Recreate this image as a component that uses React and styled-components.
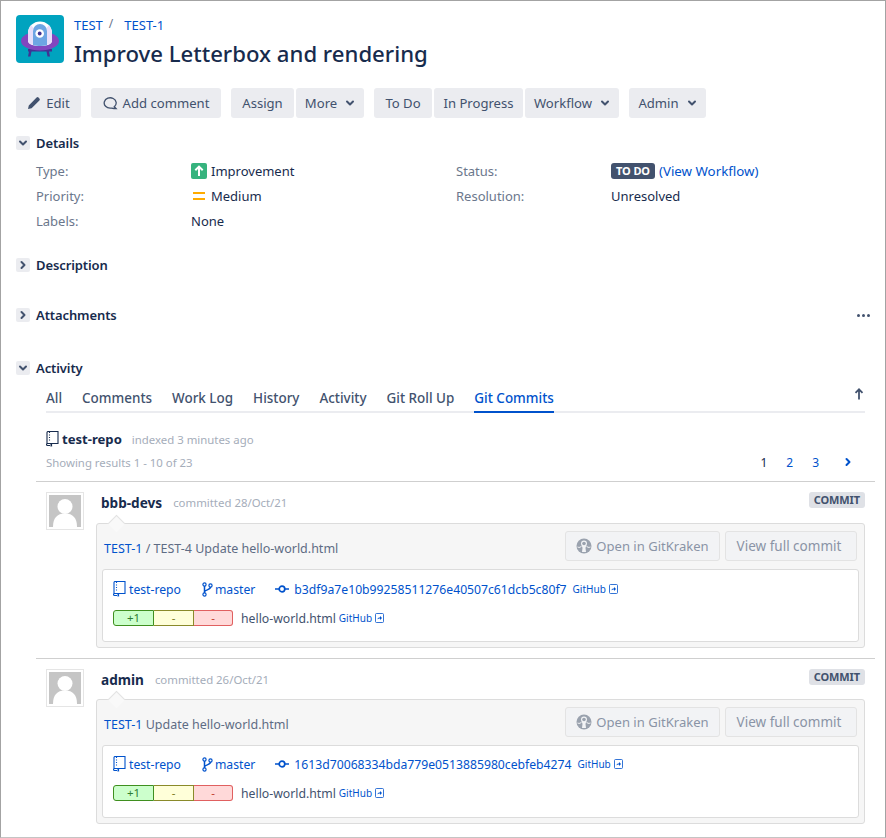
import React from "react";
import styled, { createGlobalStyle } from "styled-components";

const Global = createGlobalStyle`
  html, body { margin: 0; padding: 0; background: #fff; }
  body { font-family: "Noto Sans", "Open Sans", sans-serif; font-size: 13px; color: #172b4d; }
  * { box-sizing: border-box; }
`;

const Page = styled.div`
  width: 886px; height: 838px; overflow: hidden;
  border: 1px solid #a3a3a3; border-bottom-color: #c4c4c4;
  padding: 14px 20px 0 15px;
`;
const Header = styled.header`display: flex; gap: 10px; height: 59px;`;
const HeadText = styled.div`display: flex; flex-direction: column;`;
const Crumbs = styled.div`display: flex; height: 20px; align-items: center; font-size: 13px;`;
const Link = styled.a`color: #0052cc; text-decoration: none;`;
const Slash = styled.span`color: #6b778c; margin: -4px 11px 0 6px; font-size: 12px;`;
const Title = styled.h1`margin: 1px 0 0; font-size: 22.15px; font-weight: 500; line-height: 34px; height: 34px;`;

const Toolbar = styled.div`display: flex; margin-top: 14px; height: 30px;`;
const Group = styled.div`display: flex; gap: 2px; margin-right: 10px;`;
const Btn = styled.button`
  height: 30px; width: ${p => p.$w}px; border: 0; padding: 0; background: #ebecf0; color: #42526e;
  border-radius: 3px; font: inherit; font-size: 13.1px;
  display: flex; align-items: center; justify-content: center; gap: ${p => p.$g ?? 5}px;
`;

const SectionHead = styled.div`
  display: flex; align-items: center; height: 20px; gap: 6px;
  margin-top: ${p => p.$mt}px; font-weight: 600; font-size: 13px; color: #172b4d; letter-spacing: -0.1px;
`;
const Toggle = styled.span`
  width: 14px; height: 14px; border-radius: 2px; background: #ebecf0; display: flex; align-items: center; justify-content: center;
`;
const Spacer = styled.div`flex: 1;`;
const Dots = styled.span`display: flex; gap: 2px; margin-right: -5px;`;
const Dot = styled.i`width: 3px; height: 3px; border-radius: 50%; background: #42526e; display: block;`;

const Details = styled.div`display: grid; grid-template-columns: 155px 265px 155px 1fr; grid-auto-rows: 25px; margin: 5px 0 0 20px; align-items: center;`;
const Label = styled.div`color: #6b778c;`;
const Value = styled.div`display: flex; align-items: center; gap: 4px; color: #172b4d;`;
const Lozenge = styled.span`
  background: #42526e; color: #fff; font-size: 11px; font-weight: 700; border-radius: 3px; padding: 0 5px; height: 16px; line-height: 16px; letter-spacing: -0.1px;
`;
const WideLink = styled(Link)`font-size: 13.3px;`;

const Activity = styled.div`margin-left: 30px;`;
const TabsRow = styled.div`display: flex; gap: 20px; height: 26px; border-bottom: 2px solid #ebecf0; margin-top: 9px; position: relative; width: 819px;`;
const Tab = styled.a`
  color: ${p => p.$active ? "#0052cc" : "#42526e"}; font-weight: 500; font-size: 13.45px; height: 26px; line-height: 23px;
  border-bottom: 2px solid ${p => p.$active ? "#0052cc" : "transparent"};
`;
const Top = styled.span`position: absolute; right: 0; top: 0;`;
const RepoRow = styled.div`display: flex; align-items: center; height: 20px; margin-top: 16px; gap: 3px;`;
const RepoName = styled.b`font-weight: 700; font-size: 13.1px; color: #172b4d; margin-right: 7px;`;
const Muted = styled.span`color: #a5adba; font-size: 11.4px;`;
const ResultRow = styled.div`display: flex; justify-content: space-between; align-items: center; height: 20px; margin-top: 3px; width: 819px;`;
const Pager = styled.div`display: flex; align-items: center; gap: 19px; font-size: 12px; padding-right: 12px;`;
const PageNo = styled.span`color: ${p => p.$active ? "#172b4d" : "#0052cc"};`;
const PagerNext = styled.span`display: flex; margin-left: 5px;`;
const PagerGap = styled.div`height: 9px;`;

const Commit = styled.section`
  margin-left: -10px; width: 839px; border-top: 1px solid #cfcfcf;
  height: 177px; padding: 10px 10px 0 10px; display: grid; grid-template-columns: 50px 1fr; position: relative;
`;
const Avatar = styled.div`width: 38px; height: 38px; border: 1px solid #e5e5e5; padding: 2px; background: #fff;`;
const AvatarImg = styled.div`width: 32px; height: 32px; background: #c5c5c5; overflow: hidden;`;
const CommitBody = styled.div``;
const Meta = styled.div`display: flex; align-items: center; height: 20px; gap: 11px; padding-left: 5px; position: relative;`;
const Author = styled.b`font-weight: 700; font-size: 13.6px; color: #172b4d;`;
const Tag = styled.span`
  position: absolute; right: 0; top: 0; background: #dfe1e6; color: #42526e; font-size: 11px; font-weight: 700;
  height: 16px; line-height: 16px; padding: 0 5px; border-radius: 3px; letter-spacing: -0.1px;
`;
const Card = styled.div`
  margin-top: ${p => p.$tight ? 10 : 11}px; height: 125px; border: 1px solid #dcdcdc; border-radius: 3px; background: #f6f6f6; padding: 7px 5px 0; position: relative;
  &::before { content: ""; position: absolute; left: 13px; top: -7px; width: 12px; height: 12px; background: #f9f9f9; border-left: 1px solid #e2e2e2; border-top: 1px solid #e2e2e2; transform: rotate(45deg) scale(.95); }
`;
const CardTop = styled.div`display: flex; align-items: center; height: 30px; position: relative; padding-right: 2px;`;
const Msg = styled.div`flex: 1; padding: 5px 0 0 2px; color: #5e6c84; font-size: 12.5px;`;
const GhostBtn = styled.span`
  height: 30px; border: 1px solid #e3e3e3; border-radius: 3px; background: #f2f3f5; color: #8a94a6; font-size: ${p => p.$fs}px;
  width: ${p => p.$w}px; display: flex; align-items: center; justify-content: center; gap: 4px; margin-left: 5px;
  padding-right: ${p => p.$pr || 0}px;
`;
const Inner = styled.div`
  margin-top: 8px; height: 73px; background: #fff; border: 1px solid #dcdcdc; border-radius: 3px; padding: ${p => p.$tight ? 8 : 9}px 10px 0;
`;
const InfoRow = styled.div`display: flex; align-items: center; height: 20px; color: #0052cc;`;
const Item = styled.span`display: flex; align-items: center; gap: ${p => p.$g ?? 3}px; margin-right: ${p => p.$m ?? 20}px; font-size: 12.2px;`;
const ShaIcon = styled.span`display: flex; margin-right: 2px;`;
const Small = styled.span`font-size: 10px; color: #0052cc; display: inline-flex; align-items: center; gap: 3px;`;
const Diff = styled.div`display: flex; margin-top: 9px; align-items: center; height: 20px;`;
const Stat = styled.span`
  width: ${p => p.$w}px; height: 16px; font-size: 11.5px; line-height: 14px; text-align: center;
  color: ${p => p.$fg}; background: ${p => p.$bg}; border: 1px solid ${p => p.$bd};
  border-left-width: ${p => p.$noL ? 0 : 1}px;
  border-radius: ${p => p.$r || 0};
`;
const File = styled.span`margin-left: 8px; margin-right: 3px; font-size: 12.25px; color: #42526e;`;

const Chevron = ({ dir = "down", size = 10, color = "#42526e", w = 2 }) => (
  <svg width={size} height={size} viewBox="0 0 10 10" fill="none">
    <path d={dir === "down" ? "M2 3.5 5 6.5 8 3.5" : "M3.5 2 6.5 5 3.5 8"} stroke={color} strokeWidth={w} strokeLinecap="round" strokeLinejoin="round" />
  </svg>
);

const Logo = () => (
  <svg width="48" height="48" viewBox="0 0 48 48">
    <rect width="48" height="48" rx="4" fill="#00a3bf" />
    <path d="M12 34h24v2.500h-3l1 5h-2.500l-1-5H15.500l-1 5H12l1-5h-1z" fill="#403294" />
    <ellipse cx="24" cy="26" rx="19" ry="9.500" fill="#8246bf" />
    <path d="M12 18a12 11.500 0 0 1 24 0v8c0 3-5 5-12 5s-12-2-12-5z" fill="#fff" />
    <path d="M12 18c0-3 1.500-6 3-8l2.500 3v17c-3-.8-5.500-2-5.500-4zM36 18c0-3-1.500-6-3-8l-2.500 3v17c3-.8 5.500-2 5.500-4z" fill="#e6defa" />
    <path d="M17 30V16a7 7 0 0 1 14 0v14.300c-4 1-10 1-14-.3z" fill="#6da5e3" />
    <circle cx="23.700" cy="18.500" r="4.300" fill="#fff" />
    <circle cx="23.700" cy="18.500" r="1.900" fill="#403294" />
  </svg>
);

const Pencil = () => (
  <svg width="14" height="14" viewBox="0 0 14 14"><path d="M1 13l.8-3.600L9.600 1.600a1.300 1.300 0 0 1 1.900 0l.9.9a1.300 1.300 0 0 1 0 1.900L4.600 12.200z" fill="#42526e" /></svg>
);
const Bubble = () => (
  <svg width="15" height="14" viewBox="0 0 15 14" fill="none"><path d="M13 12.500 11.300 10.800A6 5.200 0 1 0 7.500 12.200c1 0 2-.1 3.500 .3z" stroke="#42526e" strokeWidth="1.300" /></svg>
);
const Improvement = () => (
  <svg width="16" height="16" viewBox="0 0 16 16"><rect width="16" height="16" rx="2" fill="#36b37e" /><path d="M8 13V3.800M4.300 7.300 8 3.600l3.700 3.700" stroke="#fff" strokeWidth="2" fill="none" /></svg>
);
const Medium = () => (
  <svg width="16" height="16" viewBox="0 0 16 16"><path d="M2 4h12v2H2zM2 10h12v2H2z" fill="#ffab00" /></svg>
);
const Book = ({ color = "#172b4d", size = 14 }) => (
  <svg width={size - 1} height={size + 2} viewBox="0 0 13 16" fill="none" stroke={color} strokeWidth="1.100">
    <path d="M1 13V1.500a1 1 0 0 1 1-1h10v12H1.500a1 1 0 0 0 0 2H4" />
    <path d="M3.500 1v10" strokeDasharray="1 1.500" />
    <path d="M4.500 13v2.800l.8-.6.800.6V13" fill={color} stroke="none" />
  </svg>
);
const Branch = () => (
  <svg width="11" height="15" viewBox="0 0 11 15" fill="none" stroke="#0052cc" strokeWidth="1.200">
    <circle cx="2.500" cy="2.500" r="1.600" /><circle cx="2.500" cy="12.500" r="1.600" /><circle cx="8.500" cy="3.500" r="1.600" />
    <path d="M2.500 4.100v6.800M8.500 5.100c0 3-6 2.500-6 5" strokeWidth="1.500" />
  </svg>
);
const CommitIcon = () => (
  <svg width="14" height="10" viewBox="0 0 14 10" fill="none" stroke="#0052cc" strokeWidth="1.700">
    <circle cx="7" cy="5" r="2.800" /><path d="M0 5h4M10 5h4" />
  </svg>
);
const External = () => (
  <svg width="9" height="10" viewBox="0 0 9 10" fill="none"><rect x=".5" y=".5" width="8" height="9" rx="1" stroke="#0052cc" strokeWidth=".8" /><path d="M2.500 6.500c0-1.500 1-2 2.500-2V3l2 2-2 2V5.500c-1 0-2 0-2.500 1z" fill="#0052cc" /></svg>
);
const Kraken = () => (
  <svg width="16" height="16" viewBox="0 0 16 16"><circle cx="8" cy="8" r="7.500" fill="#9aa2ae" /><path d="M8 2.500a3 3 0 0 1 3 3c0 2-1.500 3-1.500 4.500l.5 4H6l.5-4C6.500 8.500 5 7.500 5 5.500a3 3 0 0 1 3-3z" fill="#f2f3f5" /><path d="M1.500 9c2 1 3.500 0 4-1M14.500 9c-2 1-3.500 0-4-1" stroke="#f2f3f5" fill="none" /><circle cx="8" cy="5.500" r="1.800" fill="#9aa2ae" /></svg>
);
const ArrowUp = () => (
  <svg width="12" height="14" viewBox="0 0 12 14" fill="none"><path d="M6 12.500V2.500M2.500 5.800 6 2.300l3.500 3.500" stroke="#42526e" strokeWidth="1.800" /></svg>
);
const Person = () => (
  <svg width="32" height="32" viewBox="0 0 32 32"><circle cx="16" cy="11.500" r="7.500" fill="#fff" /><path d="M4 32c0-9 4-13.500 12-13.500S28 23 28 32z" fill="#fff" /></svg>
);

const CommitBlock = ({ author, date, message, sha, tight }) => (
  <Commit>
    <Avatar><AvatarImg><Person /></AvatarImg></Avatar>
    <CommitBody>
      <Meta><Author>{author}</Author><Muted>committed {date}</Muted><Tag>COMMIT</Tag></Meta>
      <Card $tight={tight}>
        <CardTop>
          <Msg>{message}</Msg>
          <GhostBtn $w={155} $fs={13.05}><Kraken />Open in GitKraken</GhostBtn>
          <GhostBtn $w={132} $fs={13.5} $pr={4}>View full commit</GhostBtn>
        </CardTop>
        <Inner $tight={tight}>
          <InfoRow>
            <Item $m={21}><Book color="#0052cc" />test-repo</Item>
            <Item $g={2}><Branch />master</Item>
            <Item $m={6}><ShaIcon><CommitIcon /></ShaIcon>{sha}</Item>
            <Small>GitHub <External /></Small>
          </InfoRow>
          <Diff>
            <Stat $w={41} $fg="#2e7d32" $bg="#ccffcc" $bd="#3f8f1f" $r="3px 0 0 3px">+1</Stat>
            <Stat $w={40} $noL $fg="#7a7a1a" $bg="#ffffd9" $bd="#8a8a2a">-</Stat>
            <Stat $w={39} $noL $fg="#c0392b" $bg="#ffd9d9" $bd="#e06060" $r="0 3px 3px 0">-</Stat>
            <File>hello-world.html</File>
            <Small>GitHub <External /></Small>
          </Diff>
        </Inner>
      </Card>
    </CommitBody>
  </Commit>
);

export default function App() {
  return (
    <Page>
      <Global />
      <Header>
        <Logo />
        <HeadText>
          <Crumbs><Link>TEST</Link><Slash>/</Slash><Link>TEST-1</Link></Crumbs>
          <Title>Improve Letterbox and rendering</Title>
        </HeadText>
      </Header>
      <Toolbar>
        <Group><Btn $w={65}><Pencil />Edit</Btn></Group>
        <Group><Btn $w={130}><Bubble />Add comment</Btn></Group>
        <Group>
          <Btn $w={63}>Assign</Btn>
          <Btn $w={68} $g={8}>More<Chevron /></Btn>
        </Group>
        <Group>
          <Btn $w={58}>To Do</Btn>
          <Btn $w={89}>In Progress</Btn>
          <Btn $w={94} $g={8}>Workflow<Chevron /></Btn>
        </Group>
        <Group><Btn $w={77} $g={8}>Admin<Chevron /></Btn></Group>
      </Toolbar>

      <SectionHead $mt={15}><Toggle><Chevron /></Toggle>Details</SectionHead>
      <Details>
        <Label>Type:</Label><Value><Improvement />Improvement</Value>
        <Label>Status:</Label><Value><Lozenge>TO DO</Lozenge><WideLink>(View Workflow)</WideLink></Value>
        <Label>Priority:</Label><Value><Medium />Medium</Value>
        <Label>Resolution:</Label><Value>Unresolved</Value>
        <Label>Labels:</Label><Value>None</Value>
      </Details>

      <SectionHead $mt={22}><Toggle><Chevron dir="right" /></Toggle>Description</SectionHead>
      <SectionHead $mt={30}><Toggle><Chevron dir="right" /></Toggle>Attachments<Spacer /><Dots><Dot /><Dot /><Dot /></Dots></SectionHead>
      <SectionHead $mt={33}><Toggle><Chevron /></Toggle>Activity</SectionHead>

      <Activity>
        <TabsRow>
          <Tab>All</Tab><Tab>Comments</Tab><Tab>Work Log</Tab><Tab>History</Tab><Tab>Activity</Tab><Tab>Git Roll Up</Tab><Tab $active>Git Commits</Tab>
          <Top><ArrowUp /></Top>
        </TabsRow>
        <RepoRow><Book /><RepoName>test-repo</RepoName><Muted>indexed 3 minutes ago</Muted></RepoRow>
        <ResultRow>
          <Muted>Showing results 1 - 10 of 23</Muted>
          <Pager><PageNo $active>1</PageNo><PageNo>2</PageNo><PageNo>3</PageNo><PagerNext><Chevron dir="right" color="#0052cc" /></PagerNext></Pager>
        </ResultRow>
        <PagerGap />
        <CommitBlock author="bbb-devs" date="28/Oct/21" message={<><Link>TEST-1</Link> / TEST-4 Update hello-world.html</>} sha="b3df9a7e10b99258511276e40507c61dcb5c80f7" />
        <CommitBlock tight author="admin" date="26/Oct/21" message={<><Link>TEST-1</Link> Update hello-world.html</>} sha="1613d70068334bda779e0513885980cebfeb4274" />
      </Activity>
    </Page>
  );
}
